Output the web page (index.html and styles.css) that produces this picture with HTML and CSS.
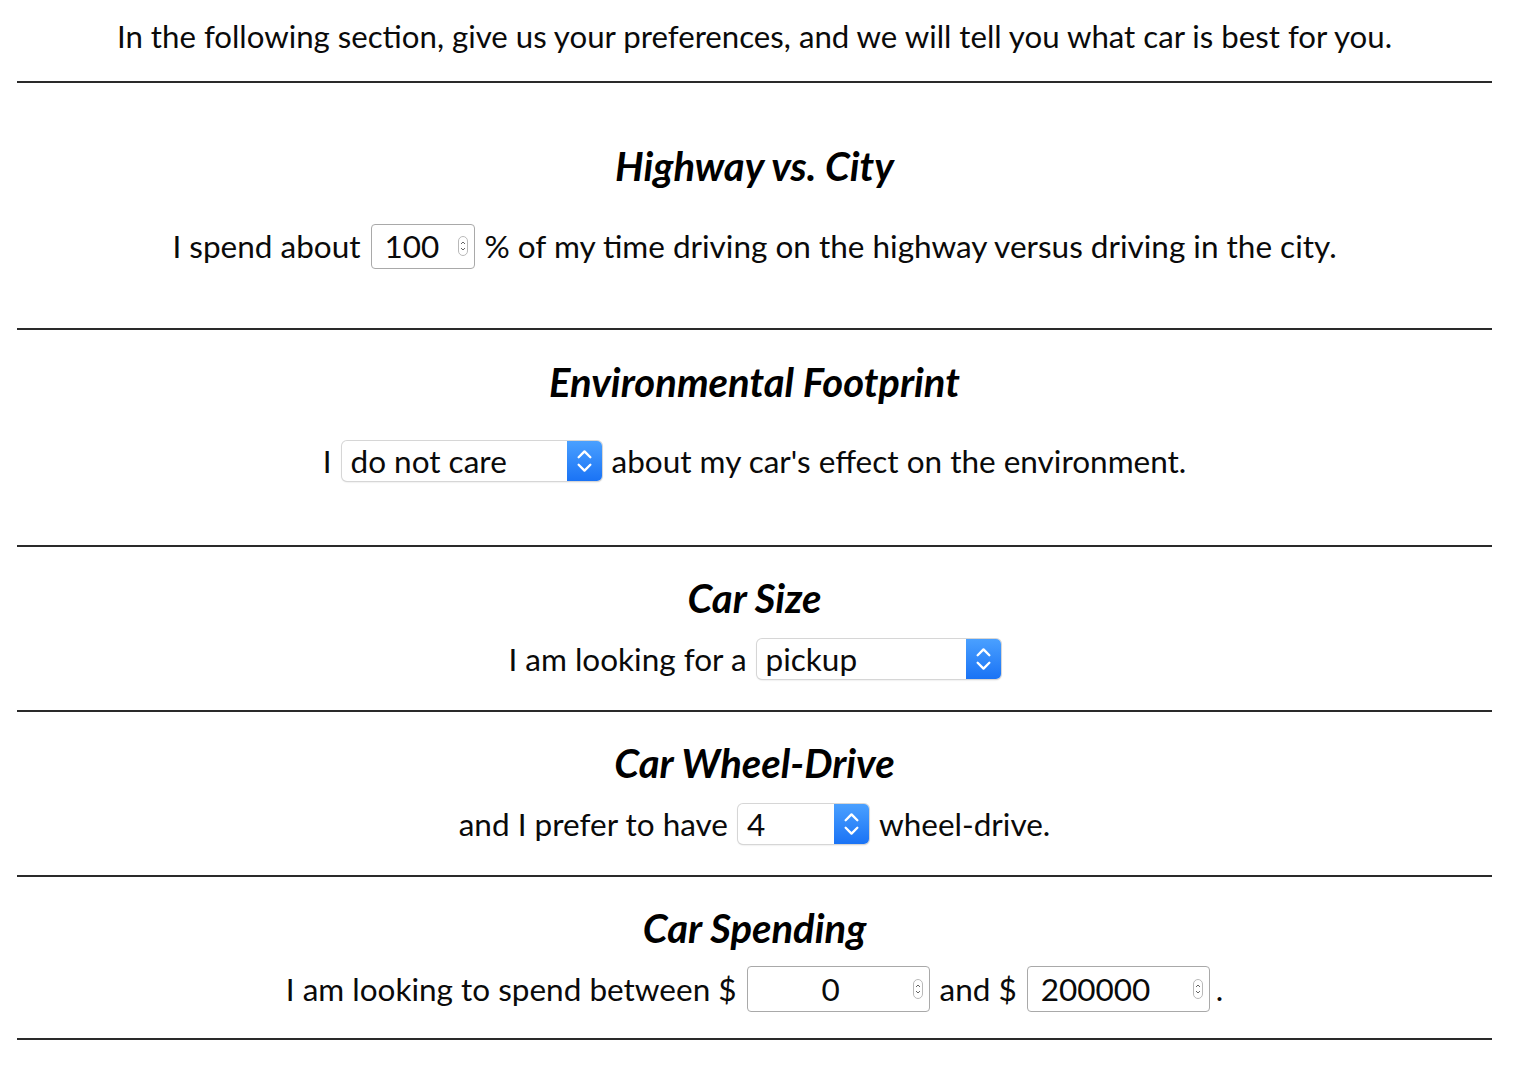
FILE: index.html
```html
<!DOCTYPE html>
<html lang="en">
<head>
<meta charset="utf-8">
<title>Car preferences</title>
<link rel="stylesheet" href="styles.css">
</head>
<body>
<div class="page">
  <p class="intro">In the following section, give us your preferences, and we will tell you what car is best for you.</p>
  <div class="rule"></div>

  <section class="section s-tall1">
    <h2>Highway vs. City</h2>
    <div class="row">
      <span>I spend about</span>
      <span class="num w100"><span class="val">100</span><svg class="spin" viewBox="0 0 10 20"><rect x="0.5" y="0.5" width="9" height="19" rx="4.5" fill="#fff" stroke="#b9b9b9"/><path d="M3 8 L5 6 L7 8 M3 12 L5 14 L7 12" fill="none" stroke="#666" stroke-width="1"/></svg></span>
      <span>% of my time driving on the highway versus driving in the city.</span>
    </div>
  </section>
  <div class="rule"></div>

  <section class="section s-tall2">
    <h2>Environmental Footprint</h2>
    <div class="row">
      <span>I</span>
      <span class="sel w-env"><span class="val">do not care</span><span class="arrow"><svg viewBox="0 0 16 26"><path d="M2.5 9.5 L8 4 L13.5 9.5 M2.5 16.5 L8 22 L13.5 16.5" fill="none" stroke="#fff" stroke-width="2.2" stroke-linecap="round" stroke-linejoin="round"/></svg></span></span>
      <span>about my car's effect on the environment.</span>
    </div>
  </section>
  <div class="rule"></div>

  <section class="section">
    <h2>Car Size</h2>
    <div class="row">
      <span>I am looking for a</span>
      <span class="sel w-size"><span class="val">pickup</span><span class="arrow"><svg viewBox="0 0 16 26"><path d="M2.5 9.5 L8 4 L13.5 9.5 M2.5 16.5 L8 22 L13.5 16.5" fill="none" stroke="#fff" stroke-width="2.2" stroke-linecap="round" stroke-linejoin="round"/></svg></span></span>
    </div>
  </section>
  <div class="rule"></div>

  <section class="section">
    <h2>Car Wheel-Drive</h2>
    <div class="row">
      <span>and I prefer to have</span>
      <span class="sel w-wd"><span class="val">4</span><span class="arrow"><svg viewBox="0 0 16 26"><path d="M2.5 9.5 L8 4 L13.5 9.5 M2.5 16.5 L8 22 L13.5 16.5" fill="none" stroke="#fff" stroke-width="2.2" stroke-linecap="round" stroke-linejoin="round"/></svg></span></span>
      <span>wheel-drive.</span>
    </div>
  </section>
  <div class="rule"></div>

  <section class="section s-last">
    <h2>Car Spending</h2>
    <div class="row">
      <span>I am looking to spend between $</span>
      <span class="num wide"><span class="val center">0</span><svg class="spin" viewBox="0 0 10 20"><rect x="0.5" y="0.5" width="9" height="19" rx="4.5" fill="#fff" stroke="#b9b9b9"/><path d="M3 8 L5 6 L7 8 M3 12 L5 14 L7 12" fill="none" stroke="#666" stroke-width="1"/></svg></span>
      <span>and $</span>
      <span class="num wide"><span class="val">200000</span><svg class="spin" viewBox="0 0 10 20"><rect x="0.5" y="0.5" width="9" height="19" rx="4.5" fill="#fff" stroke="#b9b9b9"/><path d="M3 8 L5 6 L7 8 M3 12 L5 14 L7 12" fill="none" stroke="#666" stroke-width="1"/></svg></span>
      <span class="dot">.</span>
    </div>
  </section>
  <div class="rule"></div>
</div>
</body>
</html>
```
FILE: styles.css
```css
html, body {
  margin: 0;
  padding: 0;
  background: #fff;
}

body {
  font-family: Lato, "Open Sans", sans-serif;
  color: #0a0a0a;
}

.page {
  width: 1475px;
  margin-left: 17px;
}

.intro {
  margin: 0;
  height: 81px;
  line-height: 72px;
  font-size: 31.2px;
  text-align: center;
}

.rule {
  height: 2px;
  background: #2a2a2a;
}

.section {
  padding: 26px 0 26px;
  text-align: center;
}

.section h2 {
  margin: 0 0 11px;
  height: 50px;
  line-height: 50px;
  font-size: 40px;
  font-weight: 700;
  font-style: italic;
  color: #000;
}

.s-tall1 { padding: 58px 0 57px; }
.s-tall1 h2 { margin-bottom: 30px; }
.s-tall2 { padding: 27px 0 59px; }
.s-tall2 h2 { margin-bottom: 29px; }
.s-last { padding-bottom: 24px; }

.row {
  height: 50px;
  display: flex;
  justify-content: center;
  align-items: center;
  gap: 10px;
  font-size: 31.5px;
  white-space: nowrap;
}

.num {
  box-sizing: border-box;
  display: inline-flex;
  align-items: center;
  height: 45px;
  border: 1px solid #a9a9a9;
  border-radius: 4px;
  padding: 0 6px 0 13px;
  background: #fff;
}

.num .val {
  flex: 1;
  text-align: left;
}

.num .val.center {
  text-align: center;
  padding-right: 8px;
}

.spin {
  width: 10px;
  height: 20px;
  margin-left: 4px;
}

.w100 { width: 104px; }
.wide { width: 183px; height: 46px; }

.sel {
  box-sizing: border-box;
  display: inline-flex;
  align-items: stretch;
  height: 40px;
  border-radius: 5px;
  background: #fff;
  box-shadow: 0 0 0 1px #d6d6d6, 0 1px 2px rgba(0,0,0,0.18);
  overflow: hidden;
  text-align: left;
}

.sel .val {
  flex: 1;
  padding-left: 9px;
  line-height: 40px;
}

.sel .arrow {
  width: 35px;
  display: flex;
  align-items: center;
  justify-content: center;
  background: linear-gradient(#4aa0ff, #1a73f5);
}

.sel .arrow svg {
  width: 17px;
  height: 28px;
}

.w-env { width: 260px; }
.w-size { width: 244px; }
.w-wd { width: 131px; }

.dot {
  margin-left: -4px;
}
```
